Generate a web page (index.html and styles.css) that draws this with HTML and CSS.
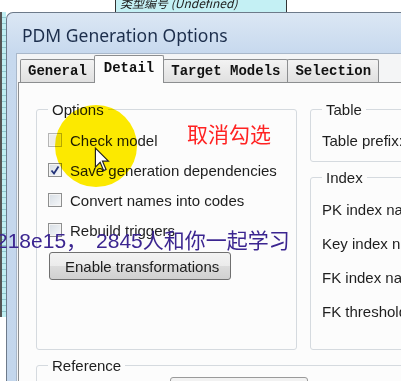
FILE: index.html
```html
<!DOCTYPE html>
<html lang="en">
<head>
  <meta charset="UTF-8">
  <title>PDM Generation Options</title>
  <link rel="stylesheet" href="styles.css">
</head>
<body>
  <div class="top">
    <div class="field-cell">类型编号 (Undefined)</div>
  </div>

  <div class="main">
    <div class="strip"></div>
    <div class="window">
      <div class="titlebar">PDM Generation Options</div>
      <div class="client">
        <div class="tabs">
          <div class="tab">General</div>
          <div class="tab active">Detail</div>
          <div class="tab">Target Models</div>
          <div class="tab">Selection</div>
        </div>
        <div class="panel">
          <div class="columns">
            <fieldset class="group options">
              <legend>Options</legend>
              <div class="opt-row"><span class="check dim"></span>Check model</div>
              <div class="opt-row"><span class="check on"><svg viewBox="0 0 12 12" width="12" height="12"><path d="M2.5 6.5 L5 9.5 L9.5 2.5" fill="none" stroke="#23337a" stroke-width="1.8"/></svg></span>Save generation dependencies</div>
              <div class="opt-row"><span class="check"></span>Convert names into codes</div>
              <div class="opt-row"><span class="check"></span>Rebuild triggers</div>
              <button class="btn">Enable transformations</button>
            </fieldset>

            <div class="right-col">
              <fieldset class="group table-group">
                <legend>Table</legend>
                <div class="field-row">Table prefix:</div>
              </fieldset>
              <fieldset class="group index-group">
                <legend>Index</legend>
                <div class="field-row tall">PK index names:</div>
                <div class="field-row tall">Key index names:</div>
                <div class="field-row tall">FK index names:</div>
                <div class="field-row tall">FK threshold:</div>
              </fieldset>
            </div>
          </div>

          <fieldset class="group reference">
            <legend>Reference</legend>
            <div class="ref-box"></div>
          </fieldset>
        </div>
      </div>
    </div>
  </div>

  <div class="highlight"></div>
  <svg class="cursor" width="17" height="26" viewBox="0 0 14 22">
    <path d="M1 1 L1 17 L5 13 L8 20 L10 19 L7 12 L12 12 Z" fill="#fff" stroke="#222" stroke-width="1"/>
  </svg>
  <div class="note">取消勾选</div>
  <div class="danmaku">218e15，<span class="num">2845</span>人和你一起学习</div>
</body>
</html>
```

FILE: styles.css
```css
body {
  margin: 0;
  width: 401px;
  height: 381px;
  overflow: hidden;
  position: relative;
  background: #fff;
  font-family: "Liberation Sans", Arial, sans-serif;
  color: #1e1e1e;
}

.top {
  height: 12px;
  display: flex;
}
.field-cell {
  margin-left: 115px;
  width: 166px;
  height: 12px;
  background: #c4f0f4;
  border-left: 1px solid #333;
  border-right: 1px solid #333;
  font-family: "Noto Sans CJK SC", sans-serif;
  font-size: 12px;
  line-height: 6px;
  padding-left: 4px;
  overflow: hidden;
  color: #222;
  font-style: italic;
}

.main {
  display: flex;
}
.strip {
  width: 4px;
  flex: none;
  height: 305px;
  border-left: 2px solid #555;
  background: repeating-linear-gradient(180deg, #bfeef2 0 5px, #8fc6cc 5px 6px);
}
.window {
  flex: none;
  width: 520px;
  height: 369px;
  border: 1px solid #6d7a8a;
  border-right: none;
  border-bottom: none;
  border-radius: 7px 0 0 0;
  background: linear-gradient(180deg, #dbe7f4 0%, #c7d9ee 40px, #c3d6ec 100%);
}
.titlebar {
  height: 37px;
  padding: 3px 0 0 15px;
  font-family: "Noto Sans", "Open Sans", sans-serif;
  font-size: 17.5px;
  line-height: 38px;
  color: #1c2e4c;
}
.client {
  margin-left: 9px;
  height: 329px;
  background: #f4f5f6;
  border-top: 1px solid #a9b8ca;
  border-left: 1px solid #a9b8ca;
}

.tabs {
  display: flex;
  align-items: flex-end;
  height: 28px;
  padding-left: 3px;
  position: relative;
  z-index: 1;
}
.tab {
  height: 22px;
  padding: 0 7px;
  border: 1px solid #8c8e90;
  border-bottom: none;
  margin-right: -1px;
  border-radius: 2px 2px 0 0;
  background: linear-gradient(180deg, #f3f3f3, #e0e0e0);
  font-family: "Liberation Mono", monospace;
  font-weight: bold;
  font-size: 14px;
  line-height: 23px;
  color: #111;
}
.tab.active {
  height: 27px;
  padding: 0 9px;
  background: #fcfcfc;
  margin-bottom: -1px;
  line-height: 25px;
  position: relative;
}

.panel {
  margin-left: 1px;
  height: 320px;
  border: 1px solid #8c8e90;
  background: #fcfcfc;
  padding: 18px 0 0 17px;
}
.columns {
  display: grid;
  grid-template-columns: 261px 1fr;
  column-gap: 13px;
}

.group {
  margin: 0;
  padding: 0 11px;
  border: 1px solid #d5dadf;
  border-radius: 3px;
  font-size: 15px;
}
.group legend {
  padding: 0 4px;
  line-height: 17px;
}

.options {
  padding-top: 7px;
  padding-bottom: 69px;
}
.opt-row {
  display: flex;
  align-items: center;
  gap: 8px;
  height: 30px;
}
.check {
  width: 12px;
  height: 12px;
  flex: none;
  border: 1px solid #8e8f8f;
  box-shadow: inset 0 0 0 1px #f4f4f4;
  background: linear-gradient(135deg, #d6dde4, #f6f8fa);
  display: flex;
  align-items: center;
  justify-content: center;
}
.check.dim {
  border-color: #b5b5b5;
  background: #ececec;
}
.btn {
  margin: 7px 0 0 1px;
  width: 182px;
  height: 28px;
  border: 1px solid #707070;
  border-radius: 3px;
  background: linear-gradient(180deg, #f3f3f3 0%, #ebebeb 50%, #dcdcdc 51%, #d0d0d0 100%);
  font-family: "Liberation Sans", Arial, sans-serif;
  font-size: 15px;
  color: #1e1e1e;
  text-align: left;
  padding-left: 15px;
}

.right-col {
  display: flex;
  flex-direction: column;
  gap: 7px;
}
.table-group {
  padding-top: 8px;
  padding-bottom: 5px;
}
.field-row {
  height: 30px;
  line-height: 30px;
  white-space: nowrap;
}
.field-row.tall {
  height: 34px;
  line-height: 34px;
}
.index-group {
  flex: 1;
  padding-top: 7px;
}

.reference {
  margin-top: 7px;
  margin-right: -40px;
  height: 40px;
}
.ref-box {
  margin: 3px 0 0 122px;
  width: 136px;
  height: 20px;
  border: 1px solid #9a9a9a;
  border-radius: 3px;
  background: #f2f2f2;
}

.highlight {
  position: absolute;
  left: 55px;
  top: 105px;
  width: 82px;
  height: 82px;
  border-radius: 50%;
  background: #ffec00;
  mix-blend-mode: multiply;
}
.cursor {
  position: absolute;
  left: 94px;
  top: 147px;
}
.note {
  position: absolute;
  left: 187px;
  top: 119px;
  font-family: "Noto Sans CJK SC", sans-serif;
  font-size: 21px;
  line-height: 28px;
  color: #ff2222;
}
.danmaku {
  position: absolute;
  left: -4px;
  top: 226px;
  font-family: "Liberation Sans", "Noto Sans CJK SC", sans-serif;
  font-size: 21px;
  line-height: 30px;
  color: #3b2590;
  white-space: nowrap;
}
.danmaku .num {
  margin-left: 9px;
}
```
